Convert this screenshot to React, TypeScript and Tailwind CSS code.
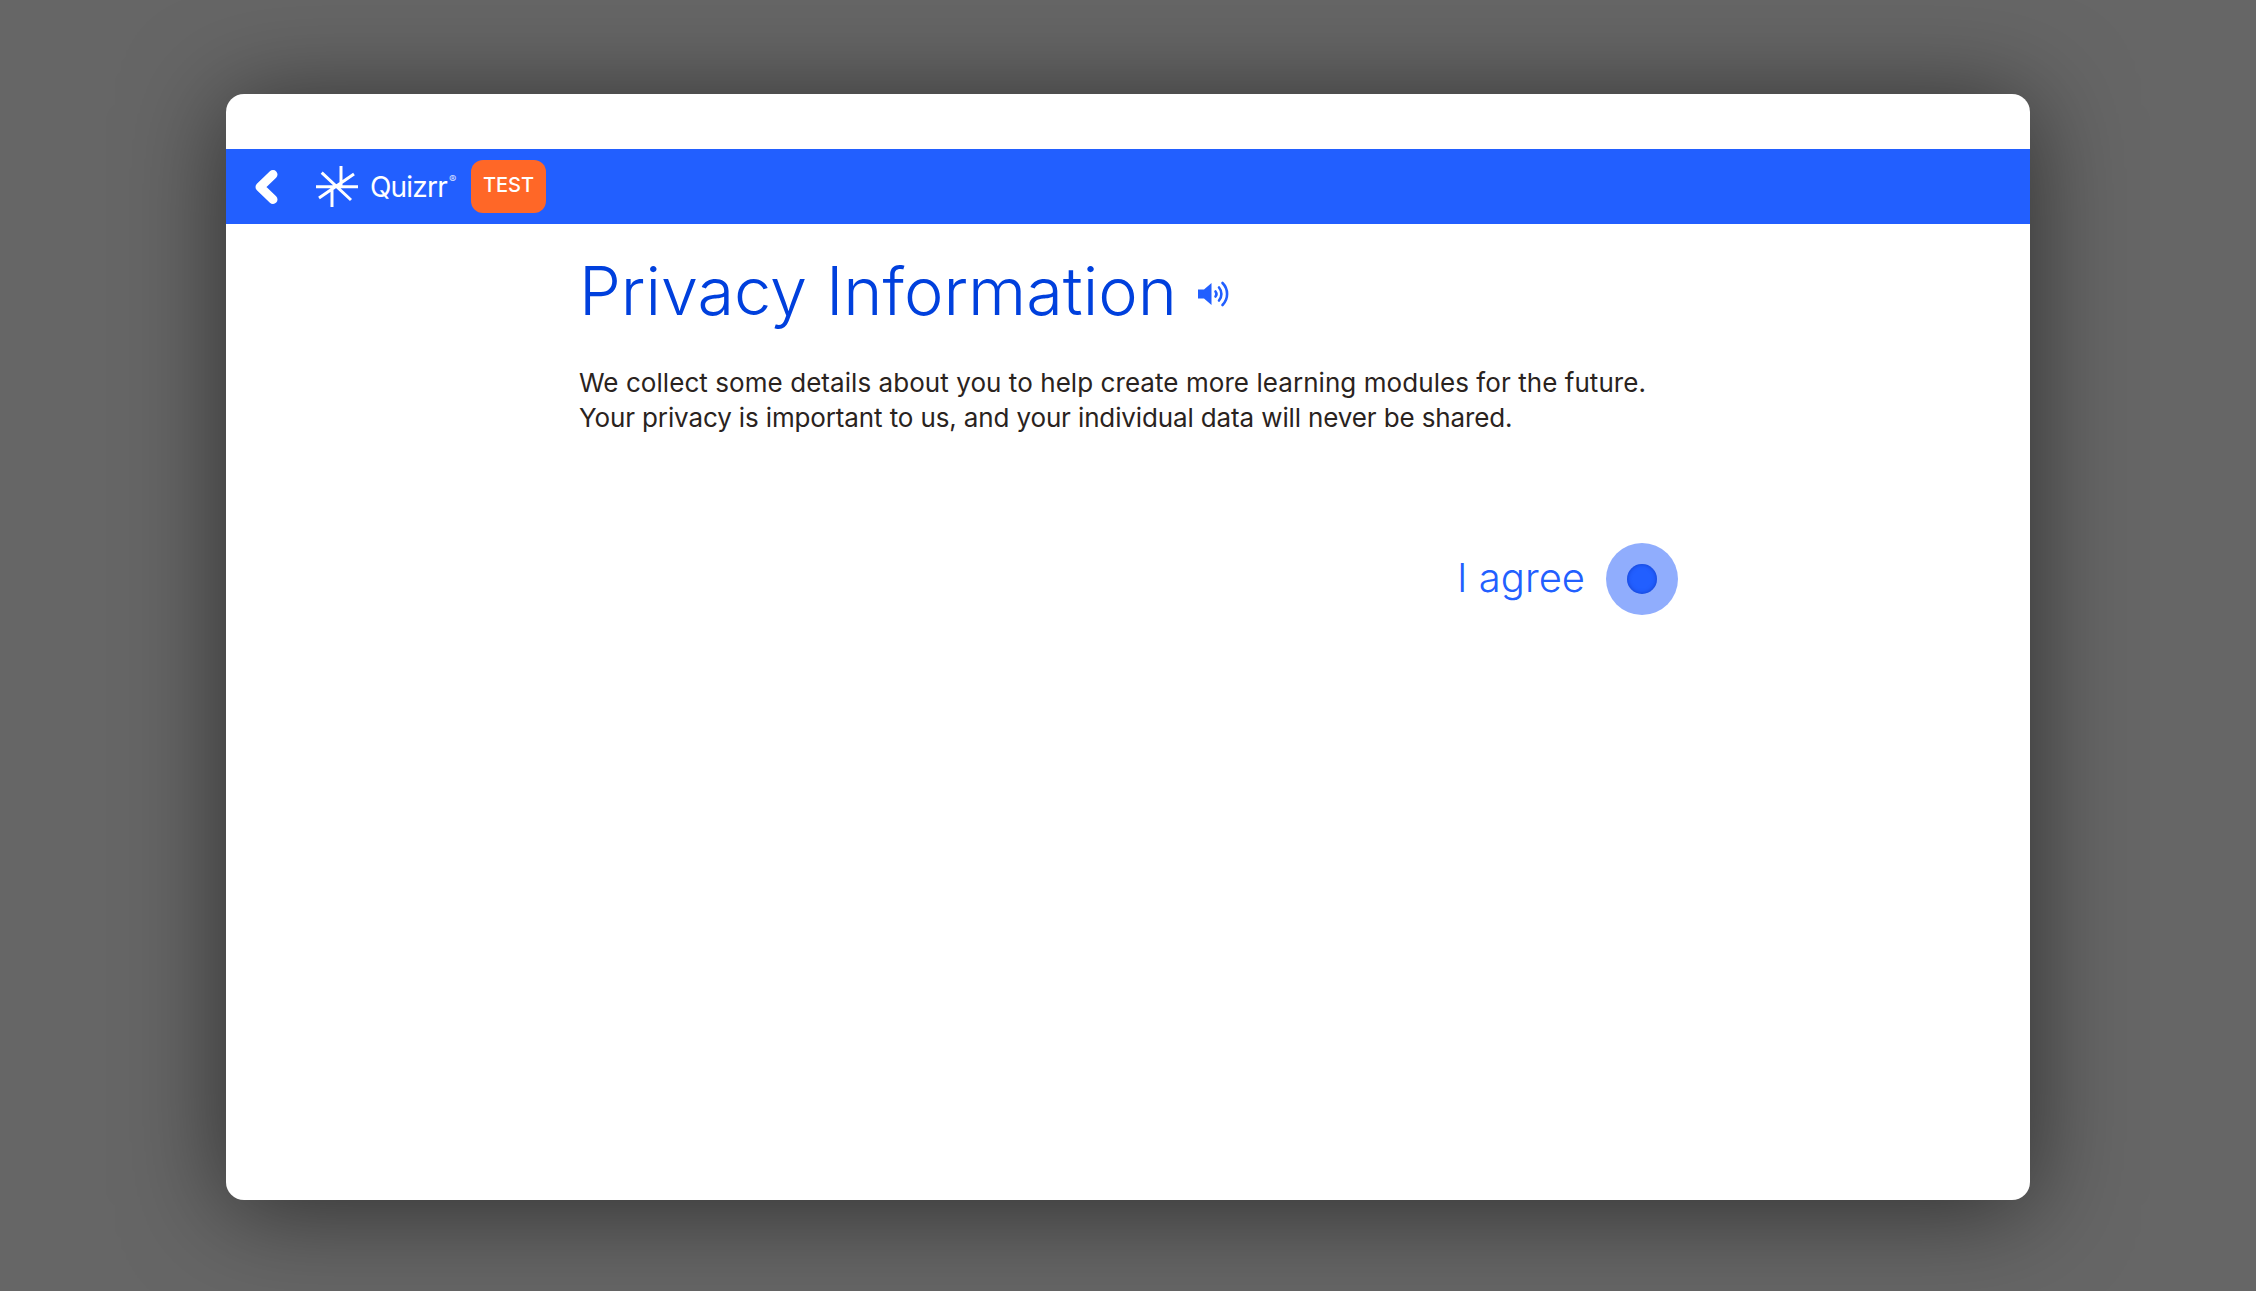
import React from 'react';

const font = { fontFamily: 'Inter, "Noto Sans", sans-serif' };

const BackChevron = () => (
    <svg width="24" height="36" viewBox="0 0 24 36" fill="none" className="shrink-0">
        <path d="M18 5.5 5 18 18 30.5" stroke="#fff" strokeWidth="9" strokeLinecap="round" strokeLinejoin="round" />
    </svg>
);

const LogoMark = () => (
    <svg width="42" height="42" viewBox="0 0 42 42" fill="none" stroke="#fff" strokeWidth="3" className="shrink-0">
        <path d="M25 0V21M16 21V41M0 20.7H42M5.7 6.7 35 34M38 8 3 32" />
    </svg>
);

const Speaker = () => (
    <svg width="32" height="26" viewBox="0 0 32 26" fill="none" className="shrink-0">
        <path d="M1 8.5h6L14.5 2v22L7 17.5H1z" fill="#225fff" />
        <path d="M18.5 10.5a4 4 0 0 1 0 5" stroke="#225fff" strokeWidth="2.6" strokeLinecap="round" />
        <path d="M22 6.5a10 10 0 0 1 0 13" stroke="#225fff" strokeWidth="2.6" strokeLinecap="round" />
        <path d="M25.5 2a15.5 15.5 0 0 1 0 22" stroke="#225fff" strokeWidth="2.6" strokeLinecap="round" />
    </svg>
);

const App: React.FC = () => {
    return (
        <div className="h-[1291px] w-full overflow-hidden bg-[#666666] pt-[94px] pl-[226px]" style={font}>
            <div className="h-[1106px] w-[1804px] overflow-hidden rounded-[18px] bg-white pt-[55px] shadow-[0_8px_100px_rgba(0,0,0,0.55)]">
                <header className="flex h-[75px] items-center bg-[#225fff] pl-[29px]">
                    <BackChevron />
                    <div className="ml-[37px]">
                        <LogoMark />
                    </div>
                    <div className="ml-[12px] flex w-[101px] items-start">
                        <span className="text-[28px] leading-none font-normal tracking-[-0.8px] text-white">Quizrr</span>
                        <span className="mt-[1px] ml-[2px] text-[11px] leading-none text-white/80">®</span>
                    </div>
                    <span className="flex h-[53px] w-[75px] items-center justify-center rounded-[12px] bg-[#ff6727] pb-[3px] text-[20px] font-medium text-white">
                        TEST
                    </span>
                </header>

                <main className="ml-[353px] w-[1099px] pt-[27px]">
                    <div className="flex items-center">
                        <h1 className="text-[66.65px] leading-[80px] font-[350] text-[#0040dd]">Privacy Information</h1>
                        <span className="mt-[6px] ml-[20px]">
                            <Speaker />
                        </span>
                    </div>
                    <p className="mt-[34px] text-[26px] leading-[35px] text-[#2a2320]">
                        <span className="block tracking-[0.06px]">
                            We collect some details about you to help create more learning modules for the future.
                        </span>
                        <span className="block tracking-[-0.13px]">
                            Your privacy is important to us, and your individual data will never be shared.
                        </span>
                    </p>
                    <div className="mt-[108px] flex items-center justify-end">
                        <span className="pb-[3px] text-[40px] font-[350] text-[#225fff]">I agree</span>
                        <span className="ml-[21px] flex h-[72px] w-[72px] items-center justify-center rounded-full bg-[#90adfd]">
                            <span className="h-[30px] w-[30px] rounded-full bg-[#225fff] shadow-[inset_0_0_4px_rgba(0,30,150,0.5)]" />
                        </span>
                    </div>
                </main>
            </div>
        </div>
    );
};

export default App;
